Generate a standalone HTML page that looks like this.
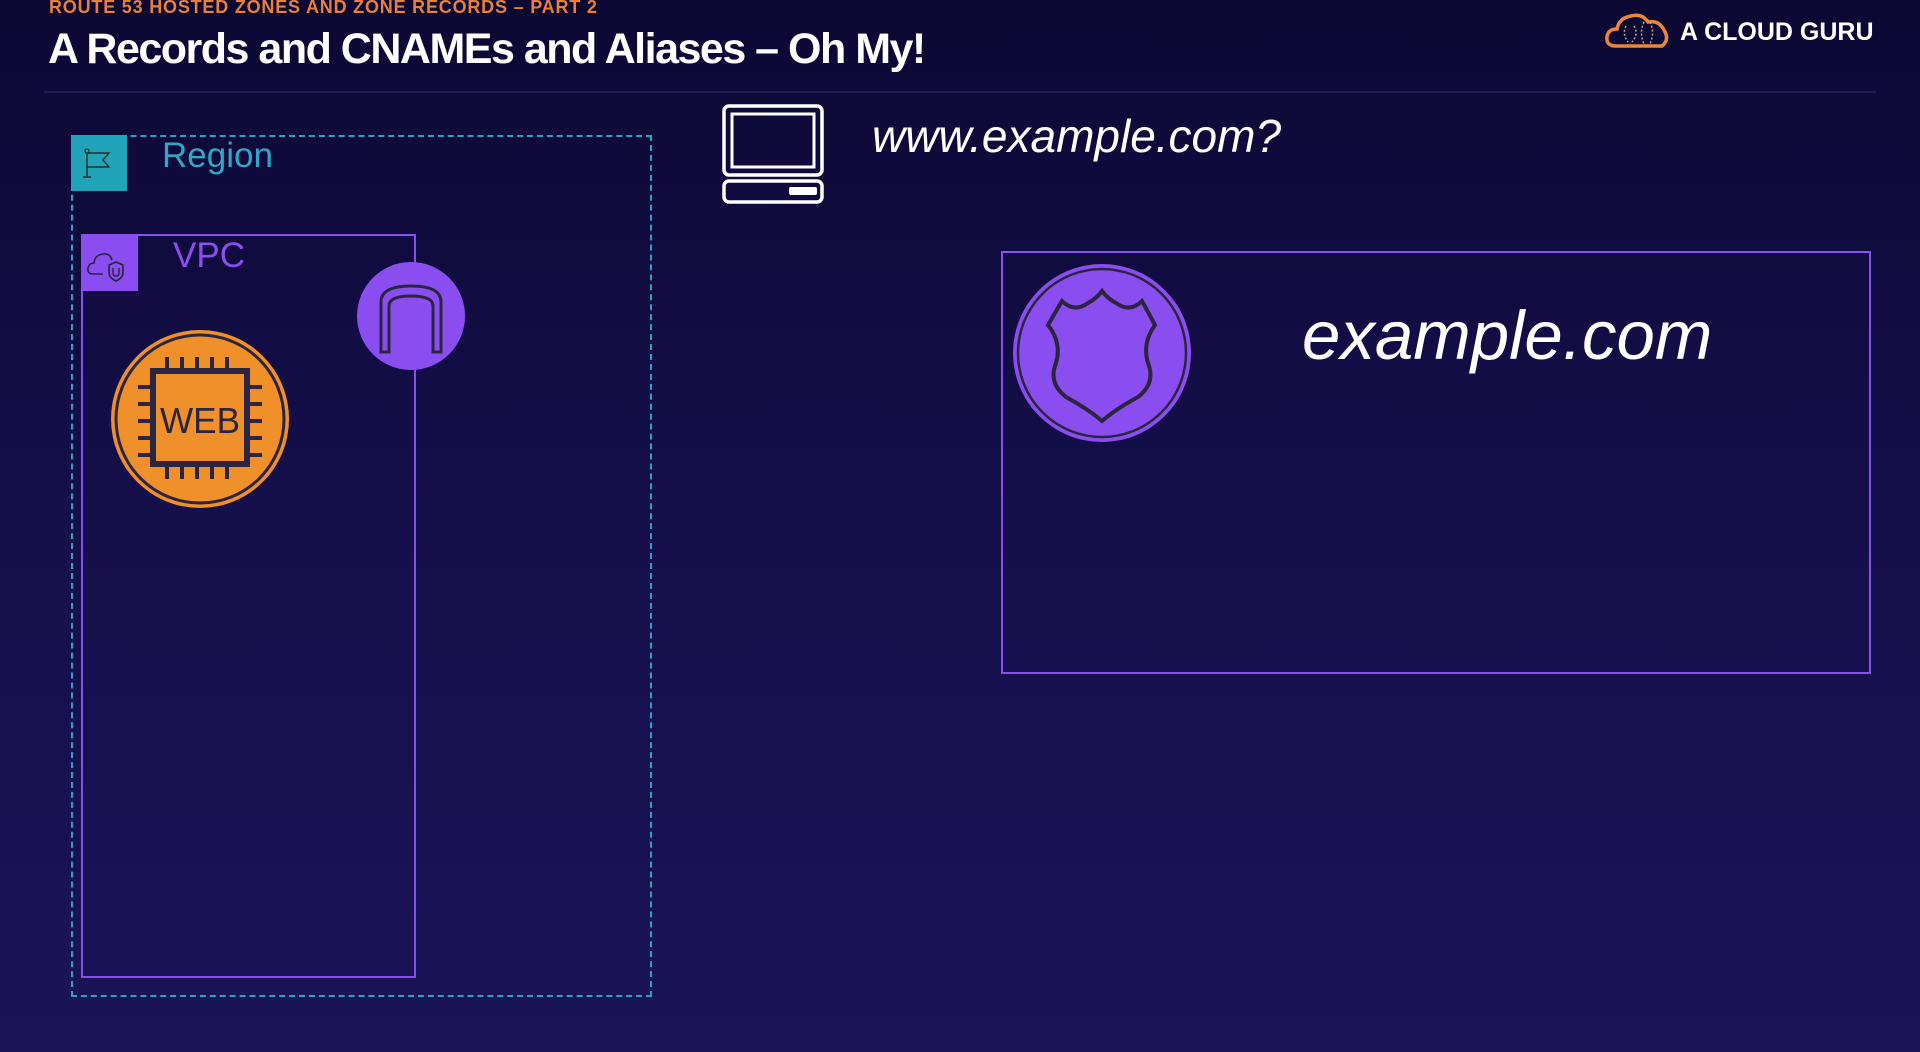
<!DOCTYPE html>
<html><head><meta charset="utf-8"><style>
html,body{margin:0;padding:0}
body{width:1920px;height:1052px;overflow:hidden;position:relative;background:linear-gradient(180deg,#0c0833 0%,#140e48 40%,#1b1457 100%);font-family:"Liberation Sans",sans-serif}
.a{position:absolute}
</style></head><body>
<div class="a" style="left:49px;top:-3px;font-size:18px;font-weight:bold;color:#e8803a;letter-spacing:0.8px">ROUTE 53 HOSTED ZONES AND ZONE RECORDS – PART 2</div>
<div class="a" style="left:48px;top:25px;font-size:43px;font-weight:bold;color:#fff;letter-spacing:-1.5px">A Records and CNAMEs and Aliases – Oh My!</div>
<div class="a" style="left:44px;top:91px;width:1832px;height:2px;background:#221c58"></div>
<svg class="a" style="left:1604px;top:10px" width="66" height="40" viewBox="0 0 66 40"><path d="M12 36 Q2 36 3 27 Q4 19 13 19 Q15 8 27 6 Q38 3 44 12 Q55 10 60 20 Q66 30 58 36 Z" fill="none" stroke="#e8873a" stroke-width="3.5"/><path d="M22 16 q-4 8 2 16 M30 16 q5 8 -2 16 M40 12 q-5 10 0 22 M46 12 q5 10 0 22" fill="none" stroke="#c9a07a" stroke-width="1.5" stroke-dasharray="2 2"/></svg>
<div class="a" style="left:1680px;top:18px;font-size:25px;font-weight:bold;color:#fff">A CLOUD GURU</div>
<!-- Region -->
<div class="a" style="left:71px;top:135px;width:581px;height:862px;border:2px dashed #2aa3c4;box-sizing:border-box"></div>
<div class="a" style="left:71px;top:135px;width:56px;height:56px;background:#21a3b8"></div>
<svg class="a" style="left:71px;top:135px" width="56" height="56"><path d="M16 18 V42 M12 42 H20 M16 18 H38 L32 25 L38 32 H16" fill="none" stroke="#233" stroke-width="1.5"/><circle cx="16" cy="16" r="2" fill="none" stroke="#233" stroke-width="1.2"/></svg>
<div class="a" style="left:162px;top:136px;font-size:35px;color:#2ea8c4">Region</div>
<!-- VPC -->
<div class="a" style="left:81px;top:234px;width:335px;height:744px;border:2px solid #8a4ef0;box-sizing:border-box"></div>
<div class="a" style="left:81px;top:234px;width:57px;height:57px;background:#8a4ef0"></div>
<svg class="a" style="left:81px;top:234px" width="57" height="57"><path d="M22 40 H12 Q6 40 7 34 Q8 29 13 29 Q14 21 22 20 Q29 19 31 26" fill="none" stroke="#2a2340" stroke-width="1.6"/><path d="M28 31 L35 28 L42 31 V38 Q42 44 35 47 Q28 44 28 38 Z" fill="none" stroke="#2a2340" stroke-width="1.6"/><path d="M32 34 V39 Q32 42 35 42 Q38 42 38 39 V34" fill="none" stroke="#2a2340" stroke-width="1.4"/></svg>
<div class="a" style="left:173px;top:236px;font-size:35px;color:#8a4ef0">VPC</div>
<!-- IGW -->
<svg class="a" style="left:357px;top:262px" width="108" height="108"><circle cx="54" cy="54" r="54" fill="#8a4ef0"/><path d="M24 90 V40 Q24 24 54 24 Q84 24 84 40 V90 H76 V44 Q76 34 54 34 Q32 34 32 44 V90 Z" fill="none" stroke="#2c2540" stroke-width="3"/></svg>
<!-- WEB -->
<svg class="a" style="left:110px;top:329px" width="180" height="180"><circle cx="90" cy="90" r="89" fill="#f0902a"/><circle cx="90" cy="90" r="84" fill="none" stroke="#2c2540" stroke-width="3"/><rect x="43" y="42" width="94" height="93" fill="none" stroke="#2c2540" stroke-width="6"/><g stroke="#2c2540" stroke-width="4"><path d="M57 28V42M72 28V42M87 28V42M102 28V42M117 28V42M57 135V150M72 135V150M87 135V150M102 135V150M117 135V150M28 58H43M28 75H43M28 92H43M28 109H43M28 126H43M137 58H152M137 75H152M137 92H152M137 109H152M137 126H152"/></g><text x="90" y="104" text-anchor="middle" font-family="Liberation Sans" font-size="36" fill="#2c2540" textLength="80" lengthAdjust="spacingAndGlyphs">WEB</text></svg>
<!-- laptop -->
<svg class="a" style="left:722px;top:104px" width="102" height="100"><rect x="2" y="2" width="98" height="69" rx="5" fill="none" stroke="#fff" stroke-width="3.5"/><rect x="10" y="10" width="82" height="53" fill="none" stroke="#fff" stroke-width="3"/><rect x="2" y="77" width="98" height="21" rx="5" fill="none" stroke="#fff" stroke-width="3.5"/><rect x="67" y="83" width="28" height="8" rx="2" fill="#fff"/></svg>
<div class="a" style="left:872px;top:109px;font-size:46px;font-style:italic;color:#fff">www.example.com?</div>
<!-- hosted zone -->
<div class="a" style="left:1001px;top:251px;width:870px;height:423px;border:2px solid #8a4ef0;box-sizing:border-box"></div>
<svg class="a" style="left:1012px;top:263px" width="180" height="180"><circle cx="90" cy="90" r="89" fill="#8a4ef0"/><circle cx="90" cy="90" r="84" fill="none" stroke="#2c2540" stroke-width="2.5"/><path d="M36 62 L50 38 Q62 50 76 40 Q84 36 90 28 Q96 36 104 40 Q118 50 130 38 L143 62 Q130 80 136 100 Q144 120 126 134 Q104 146 90 158 Q76 146 54 134 Q36 120 44 100 Q50 80 36 62 Z" fill="#8a4ef0" stroke="#2c2540" stroke-width="4"/></svg>
<div class="a" style="left:1302px;top:296px;font-size:69px;font-style:italic;color:#fff">example.com</div>
</body></html>
